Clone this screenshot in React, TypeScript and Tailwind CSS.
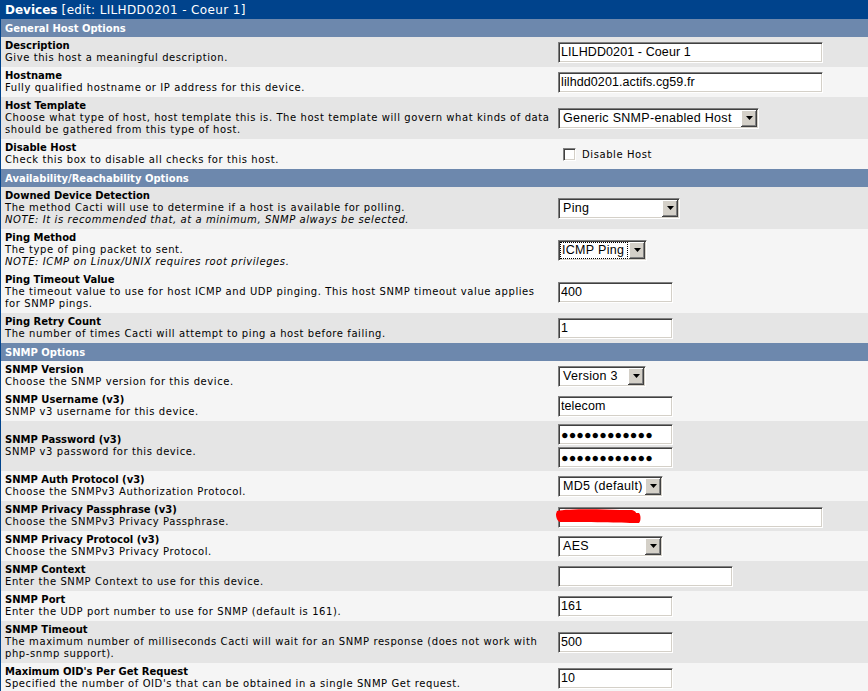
import type { ReactNode } from "react"

const sans = "font-['DejaVu_Sans',Verdana,sans-serif]"
const arial = "font-['Liberation_Sans',Arial,sans-serif]"
const sunken =
  "border border-t-[#808080] border-l-[#808080] border-b-white border-r-white shadow-[inset_1px_1px_0_#404040,inset_-1px_-1px_0_#d4d0c8]"

interface RowProps {
  dark?: boolean
  label: string
  lines: string[]
  note?: string
  children?: ReactNode
}

const Row = ({ dark, label, lines, note, children }: RowProps) => (
  <div className={`flex ${dark ? "bg-[#e5e5e5]" : "bg-[#f5f5f5]"}`}>
    <div className="w-[556px] shrink-0 pl-[4px] py-[3px] flex flex-col justify-center leading-[12px] text-[10px] text-black whitespace-nowrap overflow-hidden">
      <div className="font-bold">{label}</div>
      {lines.map((l) => (
        <div key={l} className="tracking-[0.58px]">
          {l}
        </div>
      ))}
      {note && <div className="italic tracking-[0.58px]">{note}</div>}
    </div>
    <div className="flex flex-1 flex-col justify-center gap-[2px] pl-px py-[3px]">{children}</div>
  </div>
)

const Header = ({ title }: { title: string }) => (
  <div className="h-[18px] bg-[#6d88ad] pl-[4px] flex items-center text-[10px] font-bold text-white">{title}</div>
)

const TextBox = ({ w, value = "" }: { w: string; value?: string }) => (
  <input
    readOnly
    value={value}
    className={`${w} h-[21px] bg-white ${sunken} pl-[2px] text-[12.5px] tracking-[0.1px] ${arial} text-black outline-none`}
  />
)

const Combo = ({ w, value, focus }: { w: string; value: string; focus?: boolean }) => (
  <div className={`${w} h-[21px] flex bg-white ${sunken}`}>
    <div className="flex-1 flex p-[1px] min-w-0">
      <div
        className={`flex-1 flex items-center text-[12.5px] tracking-[0.3px] ${arial} text-black whitespace-nowrap overflow-hidden ${
          focus ? "border border-dotted border-black pl-px" : "pl-[3px]"
        }`}
      >
        {value}
      </div>
    </div>
    <div className="w-[16px] shrink-0 my-[1px] mr-[1px] bg-[#d4d0c8] shadow-[inset_-1px_-1px_0_#404040,inset_1px_1px_0_#ffffff,inset_-2px_-2px_0_#808080] flex items-center justify-center">
      <svg width="7" height="4" viewBox="0 0 7 4">
        <path d="M0 0h7L3.5 4z" fill="#000" />
      </svg>
    </div>
  </div>
)

const dots = "●●●●●●●●●●●●"

export default function App() {
  return (
    <div className={`min-h-screen bg-white ${sans}`}>
      <div className="border-l border-[#00438c]">
        <div className="h-[19px] bg-[#00438c] pl-[4px] flex items-center text-[12px] text-white whitespace-nowrap">
          <span className="font-bold">Devices</span>
          <span className="tracking-[0.35px]">&nbsp;[edit: LILHDD0201 - Coeur 1]</span>
        </div>

        <Header title="General Host Options" />
        <Row dark label="Description" lines={["Give this host a meaningful description."]}>
          <TextBox w="w-[265px]" value="LILHDD0201 - Coeur 1" />
        </Row>
        <Row label="Hostname" lines={["Fully qualified hostname or IP address for this device."]}>
          <TextBox w="w-[265px]" value="lilhdd0201.actifs.cg59.fr" />
        </Row>
        <Row
          dark
          label="Host Template"
          lines={[
            "Choose what type of host, host template this is. The host template will govern what kinds of data",
            "should be gathered from this type of host.",
          ]}
        >
          <Combo w="w-[201px]" value="Generic SNMP-enabled Host" />
        </Row>
        <Row label="Disable Host" lines={["Check this box to disable all checks for this host."]}>
          <div className="flex items-center pl-[5px] gap-[6px]">
            <div className={`w-[13px] h-[13px] bg-white ${sunken}`} />
            <span className="text-[10px] tracking-[0.58px] text-black">Disable Host</span>
          </div>
        </Row>

        <Header title="Availability/Reachability Options" />
        <Row
          dark
          label="Downed Device Detection"
          lines={["The method Cacti will use to determine if a host is available for polling."]}
          note="NOTE: It is recommended that, at a minimum, SNMP always be selected."
        >
          <Combo w="w-[122px]" value="Ping" />
        </Row>
        <Row
          label="Ping Method"
          lines={["The type of ping packet to sent."]}
          note="NOTE: ICMP on Linux/UNIX requires root privileges."
        >
          <Combo w="w-[89px]" value="ICMP Ping" focus />
        </Row>
        <Row
          label="Ping Timeout Value"
          lines={[
            "The timeout value to use for host ICMP and UDP pinging. This host SNMP timeout value applies",
            "for SNMP pings.",
          ]}
        >
          <TextBox w="w-[115px]" value="400" />
        </Row>
        <Row dark label="Ping Retry Count" lines={["The number of times Cacti will attempt to ping a host before failing."]}>
          <TextBox w="w-[115px]" value="1" />
        </Row>

        <Header title="SNMP Options" />
        <Row label="SNMP Version" lines={["Choose the SNMP version for this device."]}>
          <Combo w="w-[88px]" value="Version 3" />
        </Row>
        <Row label="SNMP Username (v3)" lines={["SNMP v3 username for this device."]}>
          <TextBox w="w-[115px]" value="telecom" />
        </Row>
        <Row dark label="SNMP Password (v3)" lines={["SNMP v3 password for this device."]}>
          <TextBox w="w-[115px]" value={dots} />
          <TextBox w="w-[115px]" value={dots} />
        </Row>
        <Row label="SNMP Auth Protocol (v3)" lines={["Choose the SNMPv3 Authorization Protocol."]}>
          <Combo w="w-[105px]" value="MD5 (default)" />
        </Row>
        <Row dark label="SNMP Privacy Passphrase (v3)" lines={["Choose the SNMPv3 Privacy Passphrase."]}>
          <div className="relative">
            <TextBox w="w-[265px]" />
            {/* redaction scribble */}
            <svg className="absolute left-[-2px] top-[3px]" width="86" height="18" viewBox="0 0 86 18">
              <path
                d="M1 4 C 10 2, 40 2, 64 3 L 76 3 C 79 4, 80 5, 80 6 L 83 6 C 85 8, 85 14, 83 16 C 70 16, 40 15, 4 15 C 1 14, 0 10, 0 7 Z"
                fill="#ff0000"
              />
            </svg>
          </div>
        </Row>
        <Row label="SNMP Privacy Protocol (v3)" lines={["Choose the SNMPv3 Privacy Protocol."]}>
          <Combo w="w-[105px]" value="AES" />
        </Row>
        <Row dark label="SNMP Context" lines={["Enter the SNMP Context to use for this device."]}>
          <TextBox w="w-[175px]" />
        </Row>
        <Row label="SNMP Port" lines={["Enter the UDP port number to use for SNMP (default is 161)."]}>
          <TextBox w="w-[115px]" value="161" />
        </Row>
        <Row
          dark
          label="SNMP Timeout"
          lines={[
            "The maximum number of milliseconds Cacti will wait for an SNMP response (does not work with",
            "php-snmp support).",
          ]}
        >
          <TextBox w="w-[115px]" value="500" />
        </Row>
        <Row
          label="Maximum OID's Per Get Request"
          lines={["Specified the number of OID's that can be obtained in a single SNMP Get request."]}
        >
          <TextBox w="w-[115px]" value="10" />
        </Row>
      </div>
    </div>
  )
}
